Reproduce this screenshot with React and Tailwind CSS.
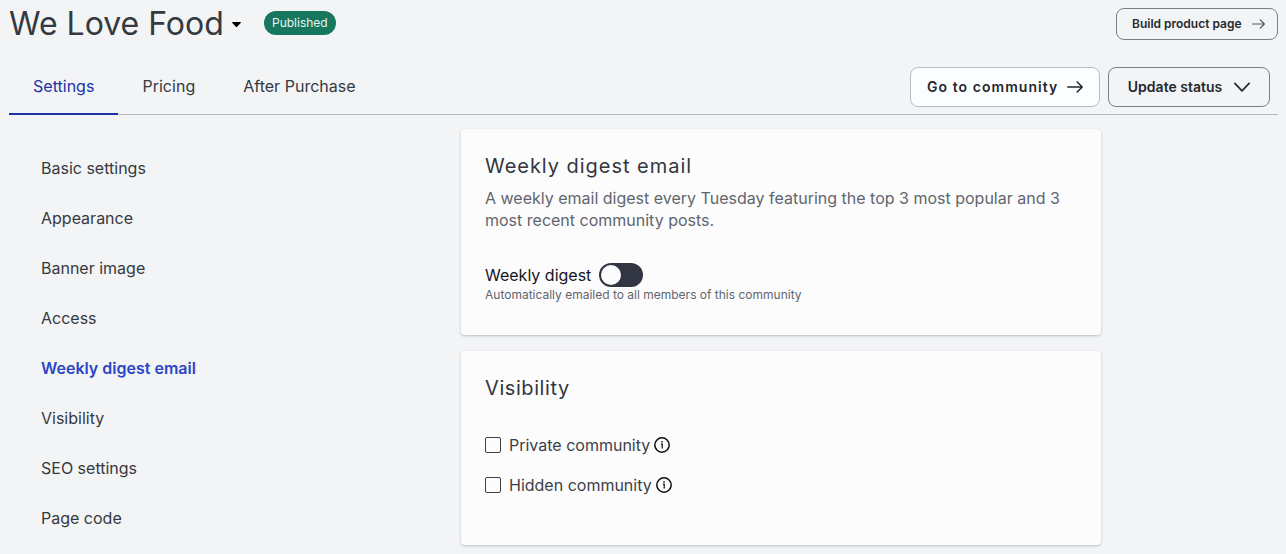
import { useState } from 'react'

const TABS = ['Settings', 'Pricing', 'After Purchase']

const SECTIONS = [
  'Basic settings',
  'Appearance',
  'Banner image',
  'Access',
  'Weekly digest email',
  'Visibility',
  'SEO settings',
  'Page code',
]

function ArrowIcon({ className, strokeWidth = 1.5 }) {
  return (
    <svg className={className} viewBox="0 0 16 12" fill="none" stroke="currentColor" strokeWidth={strokeWidth} strokeLinecap="round" strokeLinejoin="round">
      <path d="M.8 6h14.4M10.2 1l5 5-5 5" />
    </svg>
  )
}

function InfoIcon() {
  return (
    <svg className="size-4 text-[#0c0d10]" viewBox="0 0 16 16" fill="none" stroke="currentColor">
      <circle cx="8" cy="8" r="7.2" strokeWidth="1.5" />
      <path d="M7 7.2h1.2v4.3" strokeWidth="1.2" />
      <circle cx="8" cy="4.9" r="0.8" fill="currentColor" stroke="none" />
    </svg>
  )
}

function Card({ title, titleClass, className, children }) {
  return (
    <section className={`w-[640px] rounded-[4px] bg-[#fcfcfd] px-6 pt-[23px] shadow-[0_1px_3px_rgba(30,41,59,0.16),0_1px_2px_rgba(30,41,59,0.1)] ${className}`}>
      <h2 className={`text-xl leading-7 text-[#33363d] ${titleClass}`}>{title}</h2>
      {children}
    </section>
  )
}

function Toggle({ checked, onChange }) {
  return (
    <button
      role="switch"
      aria-checked={checked}
      aria-label="Weekly digest"
      onClick={() => onChange(!checked)}
      className={`flex h-6 w-11 items-center rounded-full bg-[#323642] px-0.5 ${checked ? 'justify-end' : 'justify-start'}`}
    >
      <span className="size-5 rounded-full bg-[#fcfcfd]" />
    </button>
  )
}

function CheckRow({ label }) {
  return (
    <div className="flex h-6 items-center">
      <label className="flex items-center gap-2 text-base text-[#3c3f47]">
        <input type="checkbox" className="size-4 appearance-none rounded-[2px] border border-[#3c3f47] checked:bg-[#3c3f47]" />
        {label}
      </label>
      <span className="ml-1"><InfoIcon /></span>
    </div>
  )
}

export default function App() {
  const [tab, setTab]         = useState('Settings')
  const [section, setSection] = useState('Weekly digest email')
  const [digest, setDigest]   = useState(false)

  return (
    <div className="h-[554px] overflow-hidden bg-[#f2f4f6] pl-[9px] pr-2 font-['Inter',sans-serif] text-[#36393f]">
      {/* Title row */}
      <header className="flex h-12 items-center justify-between">
        <div className="flex items-center">
          <h1 className="text-[32px] leading-10">We Love Food</h1>
          <svg className="ml-2 h-[5px] w-[9px] text-black" viewBox="0 0 9 5" fill="currentColor">
            <path d="M.8 0h7.4c.7 0 .9.6.5 1L5.1 4.7a.8.8 0 0 1-1.2 0L.3 1C-.1.6.1 0 .8 0Z" />
          </svg>
          <span className="mb-[2px] ml-[23px] flex h-6 w-[72px] items-center justify-center rounded-full bg-[#17765e] text-xs text-[#e6f5f0]">
            Published
          </span>
        </div>
        <button className="flex h-8 w-[162px] items-center justify-between rounded-[8px] border border-[#7b7e85] pl-[15px] pr-3 text-xs font-semibold text-[#25282d]">
          Build product page
          <ArrowIcon className="h-[10px] w-[13px] text-[#55585f]" />
        </button>
      </header>

      {/* Tabs */}
      <div className="flex h-[67px] justify-between border-b border-[#b5b8be]">
        <nav className="-mb-px flex">
          {TABS.map(name => (
            <button
              key={name}
              onClick={() => setTab(name)}
              className={`border-b-2 px-6 pt-[11px] text-base tracking-[0.02px] ${
                tab === name ? 'border-[#1c32a5] text-[#1c32a5]' : 'border-transparent'
              }`}
            >
              {name}
            </button>
          ))}
        </nav>
        <div className="mr-2 flex gap-2 pt-[19px] text-sm font-semibold text-[#25282d]">
          <button className="flex h-10 w-[190px] items-center justify-between rounded-[8px] border border-[#b9bcc3] bg-[#fbfdfe] px-4 tracking-[1.05px]">
            Go to community
            <ArrowIcon className="h-3 w-4" strokeWidth={1.6} />
          </button>
          <button className="flex h-10 w-[162px] items-center justify-center gap-3 rounded-[8px] border border-[#7b7e85]">
            Update status
            <svg className="h-2.5 w-4" viewBox="0 0 16 10" fill="none" stroke="currentColor" strokeWidth="1.7" strokeLinecap="round" strokeLinejoin="round">
              <path d="M.9 1.4 8 8.8l7.1-7.4" />
            </svg>
          </button>
        </div>
      </div>

      <div className="flex">
        {/* Section menu */}
        <nav className="flex w-[452px] flex-col items-start pl-8 pt-7">
          {SECTIONS.map(name => (
            <button
              key={name}
              onClick={() => setSection(name)}
              className={`flex h-[50px] items-center text-base ${
                section === name ? 'font-semibold text-[#2a45c5]' : ''
              }`}
            >
              {name}
            </button>
          ))}
        </nav>

        <main className="flex flex-col gap-4 pt-3.5">
          <Card title="Weekly digest email" titleClass="tracking-[0.97px]" className="h-[206px]">
            <p className="mt-[7px] text-base leading-[22px] text-[#62656d]">
              A weekly email digest every Tuesday featuring the top 3 most popular and 3 most recent community posts.
            </p>
            <div className="mt-8 flex h-6 items-center gap-2 text-base text-[#15171b]">
              Weekly digest
              <Toggle checked={digest} onChange={setDigest} />
            </div>
            <p className="text-xs leading-4 text-[#62656d]">Automatically emailed to all members of this community</p>
          </Card>

          <Card title="Visibility" titleClass="tracking-[0.58px]" className="h-[194px]">
            <div className="mt-[31px] flex flex-col gap-4">
              <CheckRow label="Private community" />
              <CheckRow label="Hidden community" />
            </div>
          </Card>
        </main>
      </div>
    </div>
  )
}
